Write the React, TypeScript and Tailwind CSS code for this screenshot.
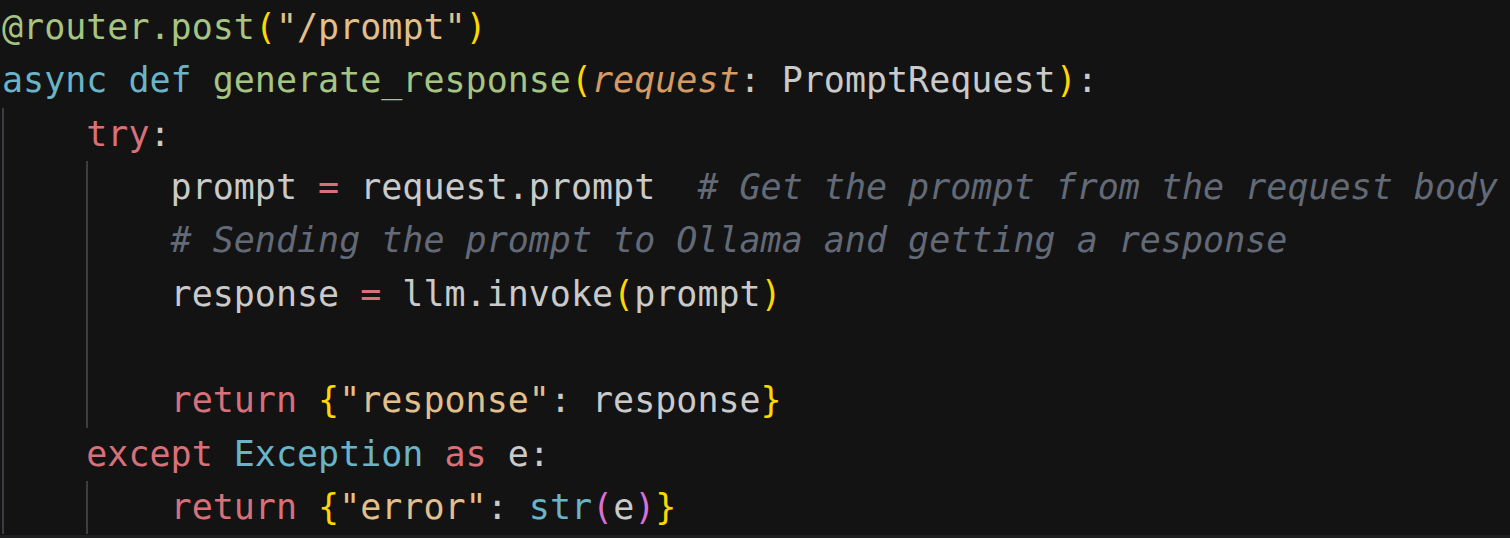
import React from "react";

type Tok = [string, string];

const C = {
  txt: "text-[#cacaca]",
  kw: "text-[#d8707a]",
  def: "text-[#6ab4c8]",
  fn: "text-[#a6c482]",
  str: "text-[#e2c08d]",
  br1: "text-[#ffd700]",
  br2: "text-[#da70d6]",
  cmt: "text-[#636a77] italic",
  prm: "text-[#d59b63] italic",
};

// guides: indent columns (in units of 4 spaces) that show a guide line
const lines: { indent: number; guides: number[]; toks: Tok[] }[] = [
  {
    indent: 0,
    guides: [],
    toks: [
      ["@router.post", C.fn],
      ["(", C.br1],
      ['"/prompt"', C.str],
      [")", C.br1],
    ],
  },
  {
    indent: 0,
    guides: [],
    toks: [
      ["async def ", C.def],
      ["generate_response", C.fn],
      ["(", C.br1],
      ["request", C.prm],
      [": PromptRequest", C.txt],
      [")", C.br1],
      [":", C.txt],
    ],
  },
  { indent: 1, guides: [0], toks: [["try", C.kw], [":", C.txt]] },
  {
    indent: 2,
    guides: [0, 1],
    toks: [
      ["prompt ", C.txt],
      ["=", C.kw],
      [" request.prompt  ", C.txt],
      ["# Get the prompt from the request body", C.cmt],
    ],
  },
  {
    indent: 2,
    guides: [0, 1],
    toks: [["# Sending the prompt to Ollama and getting a response", C.cmt]],
  },
  {
    indent: 2,
    guides: [0, 1],
    toks: [
      ["response ", C.txt],
      ["=", C.kw],
      [" llm.invoke", C.txt],
      ["(", C.br1],
      ["prompt", C.txt],
      [")", C.br1],
    ],
  },
  { indent: 2, guides: [0, 1], toks: [] },
  {
    indent: 2,
    guides: [0, 1],
    toks: [
      ["return ", C.kw],
      ["{", C.br1],
      ['"response"', C.str],
      [": response", C.txt],
      ["}", C.br1],
    ],
  },
  {
    indent: 1,
    guides: [0],
    toks: [
      ["except ", C.kw],
      ["Exception", C.def],
      [" as ", C.kw],
      ["e:", C.txt],
    ],
  },
  {
    indent: 2,
    guides: [0, 1],
    toks: [
      ["return ", C.kw],
      ["{", C.br1],
      ['"error"', C.str],
      [": ", C.txt],
      ["str", C.def],
      ["(", C.br2],
      ["e", C.txt],
      [")", C.br2],
      ["}", C.br1],
    ],
  },
];

export default function App() {
  return (
    <div className="flex h-[538px] w-[1510px] flex-col overflow-hidden bg-[#131313]">
      <div
        className="flex-1 pl-[2px] pt-[1px] text-[35px] leading-[53.33px] whitespace-pre"
        style={{ fontFamily: '"DejaVu Sans Mono", "Liberation Mono", monospace' }}
      >
        {lines.map((line, i) => (
          <div key={i} className="flex h-[53.33px]">
            {Array.from({ length: line.indent }).map((_, g) => (
              <span
                key={g}
                className={
                  line.guides.includes(g)
                    ? "inline-block h-full w-[4ch] shrink-0 border-l-2 border-[#3a3d42]"
                    : "inline-block h-full w-[4ch] shrink-0"
                }
              />
            ))}
            <span>
              {line.toks.map(([t, cls], j) => (
                <span key={j} className={cls}>
                  {t}
                </span>
              ))}
            </span>
          </div>
        ))}
      </div>
      <div className="h-[3px] bg-[#1e1f23]" />
    </div>
  );
}
